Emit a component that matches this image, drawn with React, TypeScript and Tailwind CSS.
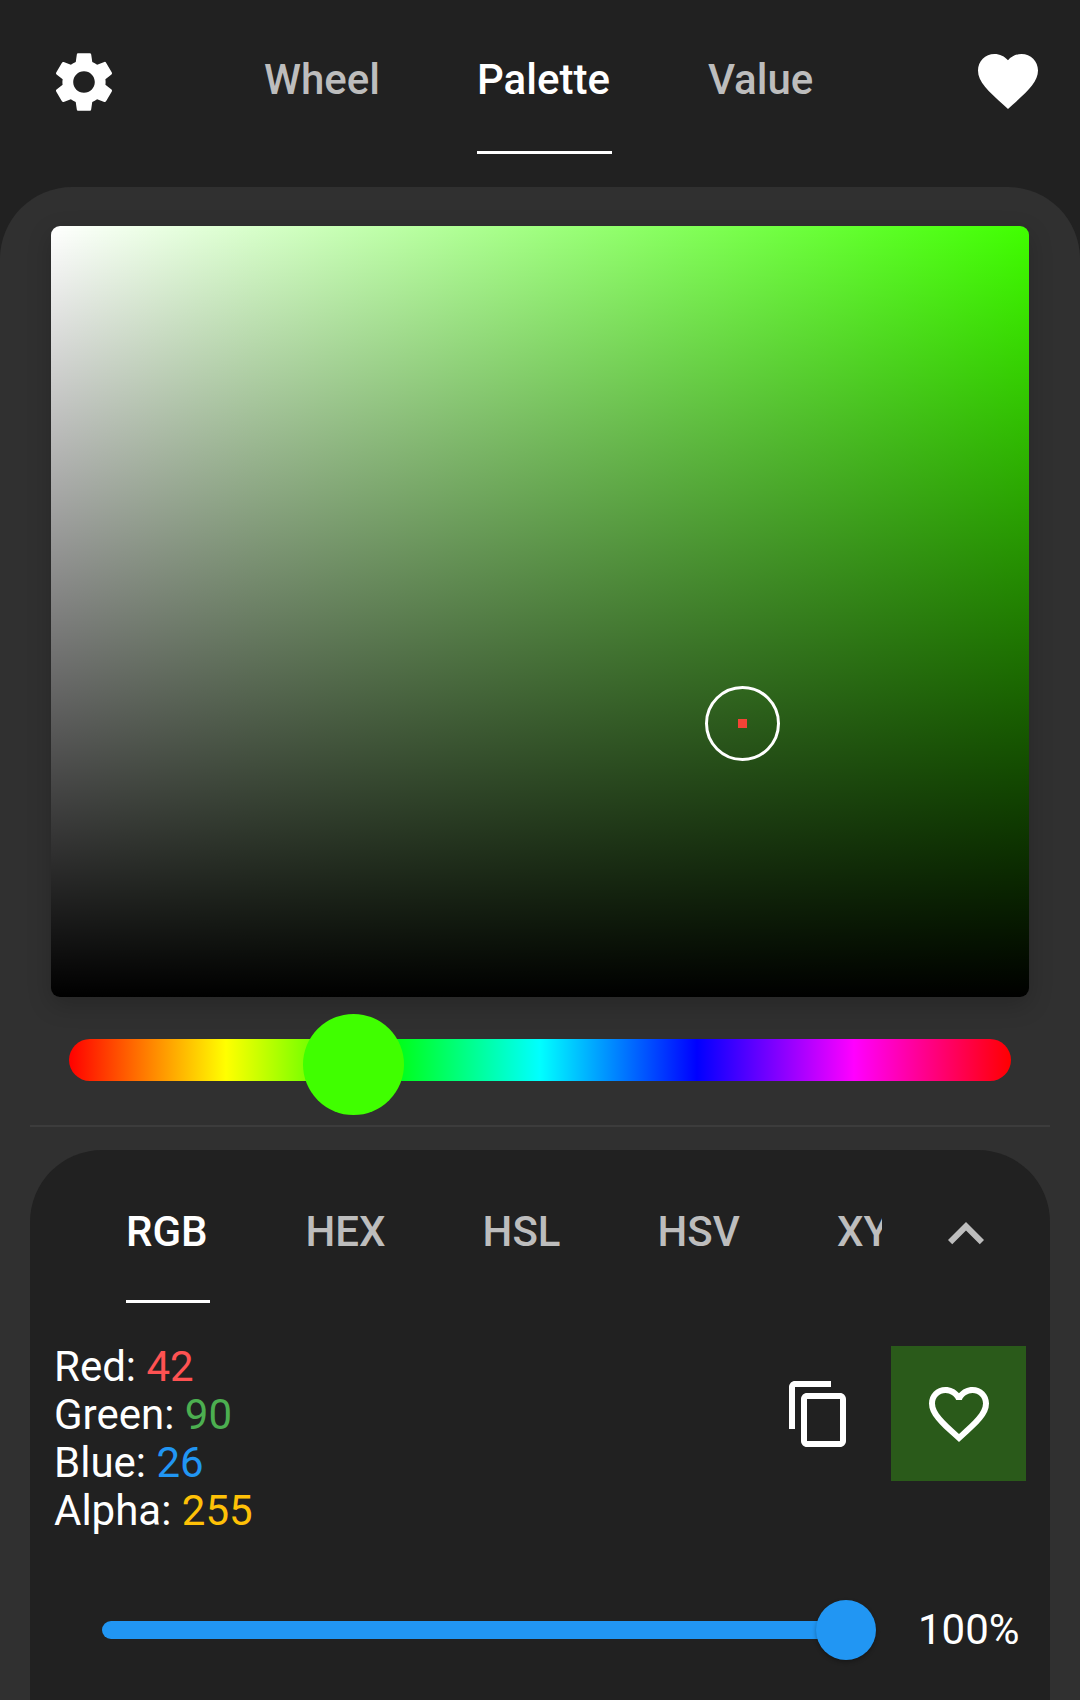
import { MdContentCopy, MdFavorite, MdFavoriteBorder, MdKeyboardArrowUp, MdSettings } from 'react-icons/md'

function ColorValue(props: { label: string; value: number; className: string }) {
  return (
    <div className="h-[48px] leading-[48px]">
      {props.label}: <span className={props.className}>{props.value}</span>
    </div>
  )
}

export default function App() {
  return (
    <div className="h-[1700px] w-[1080px] overflow-hidden bg-[#212121] font-['Roboto',sans-serif] text-white">
      {/* top bar */}
      <div className="flex h-[187px] items-start">
        <div className="ml-[48px] mt-[46px] flex h-[72px] w-[72px] items-center justify-center">
          <MdSettings size={72} />
        </div>
        <div className="ml-[143px] flex gap-[96px] text-[42px] font-medium text-[#bdbdbd]">
          <div className="flex h-[154px] flex-col items-center px-[1px] pt-[52px] leading-[56px]">Wheel</div>
          <div className="flex h-[154px] flex-col items-center border-b-[3px] border-white pl-0 pr-[2px] pt-[52px] leading-[56px] text-white">
            Palette
          </div>
          <div className="flex h-[154px] flex-col items-center pl-0 pr-[2px] pt-[52px] leading-[56px]">Value</div>
        </div>
        <div className="ml-auto mr-[36px] mt-[45px]">
          <MdFavorite size={72} />
        </div>
      </div>

      {/* palette panel */}
      <div className="h-[1513px] rounded-t-[72px] bg-[#303030] pt-[39px]">
        <div className="relative mx-[51px] h-[771px] w-[978px] rounded-[9px] bg-[linear-gradient(to_top,#000,transparent),linear-gradient(to_right,#fff,#40ff00)] shadow-[0_8px_24px_rgba(0,0,0,0.2)]">
          <div className="absolute left-[654px] top-[460px] flex h-[75px] w-[75px] items-center justify-center rounded-full border-[3px] border-white">
            <div className="h-[9px] w-[9px] bg-[#f44336]" />
          </div>
        </div>

        <div className="relative mx-[69px] mt-[42px] h-[42px] rounded-full bg-[linear-gradient(to_right,#f00,#ff0,#0f0,#0ff,#00f,#f0f,#f00)]">
          <div className="absolute left-[234px] top-[-25px] h-[101px] w-[101px] rounded-full bg-[#40ff00]" />
        </div>

        <div className="mx-[30px] mt-[44px] h-[2px] bg-[#3c3c3c]" />

        {/* value card */}
        <div className="mx-[30px] mt-[23px] h-[560px] rounded-t-[72px] bg-[#212121]">
          <div className="flex h-[154px] items-start">
            <div className="ml-[96px] flex w-[756px] gap-[97px] overflow-hidden text-[42px] font-medium text-[#bdbdbd]">
              <div className="mr-[-1px] h-[153px] shrink-0 border-b-[3px] border-white pl-0 pr-[2px] pt-[54px] leading-[56px] text-white">RGB</div>
              <div className="h-[153px] shrink-0 pt-[54px] leading-[56px]">HEX</div>
              <div className="h-[153px] shrink-0 pt-[54px] leading-[56px]">HSL</div>
              <div className="h-[153px] shrink-0 pt-[54px] leading-[56px]">HSV</div>
              <div className="h-[153px] shrink-0 pt-[54px] leading-[56px]">XYZ</div>
            </div>
            <MdKeyboardArrowUp size={72} className="ml-[48px] mt-[48px] text-[#bdbdbd]" />
          </div>

          <div className="flex items-start">
            <div className="ml-[24px] mt-[39px] text-[42px]">
              <ColorValue label="Red" value={42} className="text-[#ff5252]" />
              <ColorValue label="Green" value={90} className="text-[#4caf50]" />
              <ColorValue label="Blue" value={26} className="text-[#2196f3]" />
              <ColorValue label="Alpha" value={255} className="text-[#ffc107]" />
            </div>
            <div className="ml-auto mr-[24px] mt-[42px] flex items-center">
              <MdContentCopy size={72} className="mr-[36px]" />
              <div className="flex h-[135px] w-[135px] items-center justify-center bg-[#2a5a1a]">
                <MdFavoriteBorder size={72} />
              </div>
            </div>
          </div>

          <div className="mt-[65px] flex items-center">
            <div className="relative ml-[72px] h-[18px] w-[754px] rounded-full bg-[#2196f3]">
              <div className="absolute right-[-20px] top-[-21px] h-[60px] w-[60px] rounded-full bg-[#2196f3] shadow-[0_2px_4px_rgba(0,0,0,0.3)]" />
            </div>
            <div className="ml-[62px] text-[42px] leading-[60px]">100%</div>
          </div>
        </div>
      </div>
    </div>
  )
}
